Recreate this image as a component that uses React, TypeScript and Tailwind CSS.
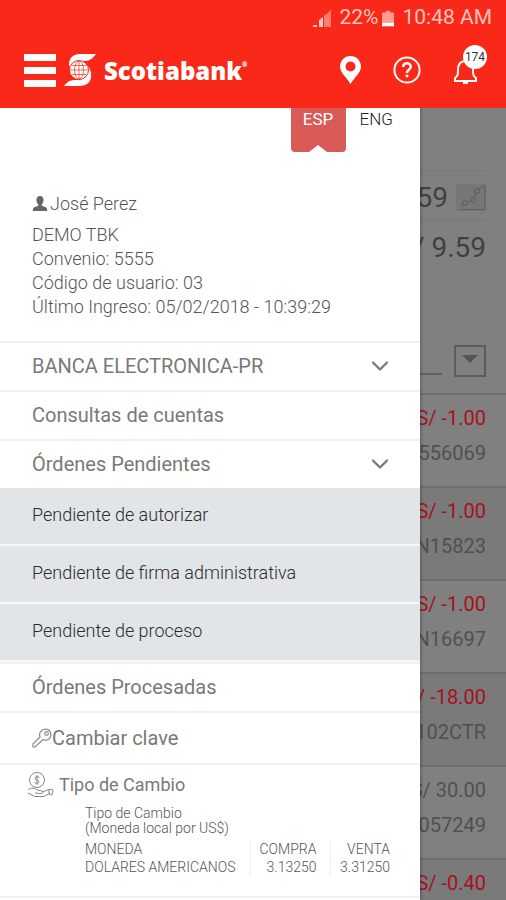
import { ChevronDown } from 'lucide-react'

interface Movement {
  amount: string
  reference: string
}

const movements: Movement[] = [
  { amount: 'S/ -1.00', reference: '556069' },
  { amount: 'S/ -1.00', reference: 'N15823' },
  { amount: 'S/ -1.00', reference: 'N16697' },
  { amount: 'S/ -18.00', reference: '102CTR' },
  { amount: 'S/ 30.00', reference: '057249' },
  { amount: 'S/ -0.40', reference: '' },
]

const pendingOrders = ['Pendiente de autorizar', 'Pendiente de firma administrativa', 'Pendiente de proceso']

function StatusBar() {
  return (
    <div className="flex h-9 items-center justify-end gap-1 pr-[14px] text-[21px] text-[#ffc4be]">
      <svg width="18" height="17" viewBox="0 0 18 17">
        <path d="M11 6L18 0V17H11Z" fill="#ff7d72" />
        <path d="M6 10L10 7V17H6ZM0 15H4V17H0Z" fill="currentColor" />
      </svg>
      <span className="ml-1">22%</span>
      <svg width="12" height="17" viewBox="0 0 13 17">
        <path d="M4 0H9V2H13V13H0V2H4Z" fill="#ff9c93" />
        <path d="M0 13H13V17H0Z" fill="#fff" />
      </svg>
      <span className="ml-1">10:48 AM</span>
    </div>
  )
}

function Logo() {
  return (
    <div className="flex items-center gap-2">
      <svg width="32" height="34" viewBox="0 0 32 34" fill="none">
        <path d="M32 1H16C8 1 5 6 5 12L7 17L14 8H21C26 8 29 5 32 1Z" fill="#fff" />
        <path d="M0 33H15C24 33 28 28 27 20C26 15 24 13 20 10L21 22C19 26 17 27 13 27H11C6 27 3 29 0 33Z" fill="#fff" />
        <circle cx="15" cy="17" r="9.500" fill="#fff" stroke="#fa2818" />
        <g stroke="#fa2818" strokeWidth="0.700">
          <ellipse cx="15" cy="17" rx="4.500" ry="9" />
          <path d="M15 8V26M6 17H24M8 12.500H22M8 21.500H22" />
        </g>
      </svg>
      <span className="flex pt-[2px] font-['Open_Sans'] text-2xl leading-8 font-extrabold text-white">
        Scotiabank<span className="text-[6px] leading-5">®</span>
      </span>
    </div>
  )
}

function Header() {
  return (
    <header className="h-[108px] shrink-0 bg-[#fa2818]">
      <StatusBar />
      <div className="flex h-[68px] items-center justify-between pr-[27px] pl-6">
        <div className="flex items-center gap-2">
          <button aria-label="Menú" className="flex flex-col gap-[6px]">
            <span className="h-[7px] w-8 bg-white" />
            <span className="h-[7px] w-8 bg-white" />
            <span className="h-[7px] w-8 bg-white" />
          </button>
          <Logo />
        </div>
        <div className="flex items-center gap-8">
          <button aria-label="Ubicación">
            <svg width="21" height="28" viewBox="0 0 21 28">
              <path
                d="M10.500 0C4.700 0 0 4.700 0 10.500C0 17 6.500 21 10.500 28C14.500 21 21 17 21 10.500C21 4.700 16.300 0 10.500 0ZM10.500 5.500a5 5 0 1 1 0 10a5 5 0 1 1 0-10Z"
                fill="#fff"
                fillRule="evenodd"
              />
            </svg>
          </button>
          <button aria-label="Ayuda">
            <svg width="28" height="28" viewBox="0 0 28 28" fill="none" stroke="#fff">
              <circle cx="14" cy="14" r="12.600" strokeWidth="2" />
              <path d="M10.200 11C10.200 6 17.800 6.200 17.800 10.800C17.800 13.600 14 13.500 14 17" strokeWidth="2.400" />
              <path d="M14 18.600V21.200" strokeWidth="2.600" />
            </svg>
          </button>
          <button aria-label="Notificaciones" className="relative">
            <svg width="26" height="28" viewBox="0 0 26 28" fill="none" stroke="#fff" strokeWidth="2">
              <path d="M2 25V22C5 20 5 18 5 14C5 8 8 5 12.500 5S20 8 20 14C20 18 20 20 23 22V25Z" />
              <path d="M10 26.500H15" strokeWidth="3" />
            </svg>
            <span className="absolute -top-[11px] left-[10px] flex size-6 items-center justify-center rounded-full bg-white text-xs text-[#333]">
              174
            </span>
          </button>
        </div>
      </div>
    </header>
  )
}

function Account() {
  return (
    <main className="col-start-1 row-start-1 overflow-hidden bg-[#808080] pt-[62px] text-right text-[#404040]">
      <div className="mx-5 flex h-[51px] items-center justify-end gap-2 border-y border-[#777] pt-1 text-[28px]">
        <span>S/ 9.59</span>
        <svg width="30" height="27" viewBox="0 0 30 27" fill="none" stroke="#5c5c5c">
          <path d="M0 0H30V27H0Z" fill="#777" stroke="none" />
          <path d="M4 25.500H29M29 1V26" stroke="#606060" />
          <circle cx="9" cy="19" r="2.500" />
          <circle cx="17" cy="16" r="2.500" />
          <circle cx="21" cy="7" r="2.500" />
          <path d="M5 23L7 21M11.500 18L14.500 17M18 13.500L20 9.500M23 5L28 1" />
        </svg>
      </div>
      <div className="mx-5 flex h-[50px] items-center justify-end pt-1 text-[28px]">S/ 9.59</div>
      <div className="mx-5 flex h-[122px] items-end justify-end gap-3 pb-4">
        <input aria-label="Buscar" className="mb-[2px] w-full border-b-2 border-[#606060] outline-none" />
        <button aria-label="Filtrar" className="flex h-8 w-8 shrink-0 justify-center border-2 border-[#5c5c5c] pt-2">
          <svg width="16" height="8" viewBox="0 0 16 8">
            <path d="M0 0H16L8 8Z" fill="#555" />
          </svg>
        </button>
      </div>
      <ul>
        {movements.map((m, i) => (
          <li
            key={i}
            className="flex h-[93px] flex-col gap-[7px] border-t-2 border-[#6f6f6f] px-5 pt-[9px] text-xl leading-7 even:bg-[#7a7a7a]"
          >
            <span className={m.amount.includes('-') ? 'text-[#a8101c]' : 'text-[#505050]'}>{m.amount}</span>
            <span className="text-[#505050]">{m.reference}</span>
          </li>
        ))}
      </ul>
    </main>
  )
}

function LanguageTabs() {
  return (
    <div className="flex justify-end gap-[14px] pr-[27px] text-[17px] leading-[22px]">
      <button className="relative h-11 w-[55px] rounded-b bg-[#d95b57] pb-[22px] text-white">
        ESP
        <svg width="18" height="7" viewBox="0 0 18 7" className="absolute bottom-0 left-[18px]">
          <path d="M0 7L9 0L18 7Z" fill="#fff" />
        </svg>
      </button>
      <button className="h-[22px] font-light text-[#222]">ENG</button>
    </div>
  )
}

function Profile() {
  return (
    <section className="px-8 pt-10 text-lg leading-6 font-light text-[#555]">
      <p className="mb-[7px] flex items-center gap-[2px] leading-6">
        <svg width="16" height="16" viewBox="-1 0 18 18" fill="#666">
          <path d="M8 0C11 0 12 2 12 4.500C12 7 11 8 10 9.500V11L15 13C16 14 16 15 16 17H0C0 15 0 14 1 13L6 11V9.500C5 8 4 7 4 4.500C4 2 5 0 8 0Z" />
        </svg>
        José Perez
      </p>
      <p>DEMO TBK</p>
      <p>Convenio: 5555</p>
      <p>Código de usuario: 03</p>
      <p>Último Ingreso: 05/02/2018 - 10:39:29</p>
    </section>
  )
}

function MenuItem({ label, expandable }: { label: string; expandable?: boolean }) {
  return (
    <button className="flex h-[49px] w-full items-center justify-between border-t-2 border-[#f0f1f2] pr-[26px] pb-[2px] pl-8 text-left text-xl">
      {label}
      {expandable && <ChevronDown size={28} strokeWidth={2} />}
    </button>
  )
}

function ExchangeRate() {
  return (
    <section className="border-y-2 border-[#f0f1f2] pt-[6px] pr-[30px] pb-5 pl-[27px]">
      <h2 className="flex h-7 items-center gap-[5px] text-lg">
        <svg width="27" height="26" viewBox="0 0 27 26" fill="none" stroke="#888" strokeWidth="1">
          <circle cx="10" cy="8" r="7.500" />
          <path d="M12.500 5.500C10 3.500 7 5 8.500 7.500L11.500 9C13 11 10 12.500 7.500 10.500M10 3V13" />
          <path d="M1 18C4 15 8 16 10 18L15 19C17 20 16 22 13 21.500L8 21M15 20L22 17.500M1 21L8 24.500H17L23 21M22 17L26 18L25 23L22 22Z" />
        </svg>
        Tipo de Cambio
      </h2>
      <div className="pt-[7px] pl-[58px] text-sm leading-[15px] font-light text-[#555]">
        <p className="mb-1">
          Tipo de Cambio
          <br />
          (Moneda local por US$)
        </p>
        <table className="w-full text-right leading-[18px]">
          <thead>
            <tr>
              <th className="text-left font-light">MONEDA</th>
              <th className="w-20 border-l border-[#f0f1f2] pr-[14px] font-light">COMPRA</th>
              <th className="w-[59px] border-l border-[#f0f1f2] font-light">VENTA</th>
            </tr>
          </thead>
          <tbody>
            <tr>
              <td className="text-left">DOLARES AMERICANOS</td>
              <td className="border-l border-[#f0f1f2] pr-[14px]">3.13250</td>
              <td className="border-l border-[#f0f1f2]">3.31250</td>
            </tr>
          </tbody>
        </table>
      </div>
    </section>
  )
}

function Drawer() {
  return (
    <aside className="z-10 col-start-1 row-start-1 w-[83%] bg-white shadow-[1px_0_3px_rgba(0,0,0,0.3)]">
      <LanguageTabs />
      <Profile />
      <nav className="mt-[22px] text-[#797979]">
        <MenuItem label="BANCA ELECTRONICA-PR" expandable />
        <MenuItem label="Consultas de cuentas" />
        <MenuItem label="Órdenes Pendientes" expandable />
        <ul className="text-lg font-light text-[#2c2c2c]">
          {pendingOrders.map((label) => (
            <li key={label} className="border-b-2 border-[#f5f7f8] bg-[#e1e5e8]">
              <button className="h-14 w-full pb-[2px] pl-8 text-left">{label}</button>
            </li>
          ))}
        </ul>
        <MenuItem label="Órdenes Procesadas" />
        <button className="flex h-[52px] w-full items-center border-t-2 border-[#f0f1f2] pl-8 text-xl">
          <svg width="20" height="20" viewBox="0 0 20 20" fill="none" stroke="#888" strokeWidth="1.200">
            <path d="M8 9C6 3 12 0 16 1.500C20 4 20 10 15 12C13 12.500 12 12 11 11.500L3 19H1V16Z" />
            <circle cx="14.500" cy="5.500" r="1.800" />
          </svg>
          Cambiar clave
        </button>
        <ExchangeRate />
      </nav>
    </aside>
  )
}

export default function App() {
  return (
    <div className="flex h-screen flex-col overflow-hidden font-['Roboto',sans-serif]">
      <Header />
      <div className="grid flex-1 grid-cols-1 overflow-hidden">
        <Account />
        <Drawer />
      </div>
    </div>
  )
}
